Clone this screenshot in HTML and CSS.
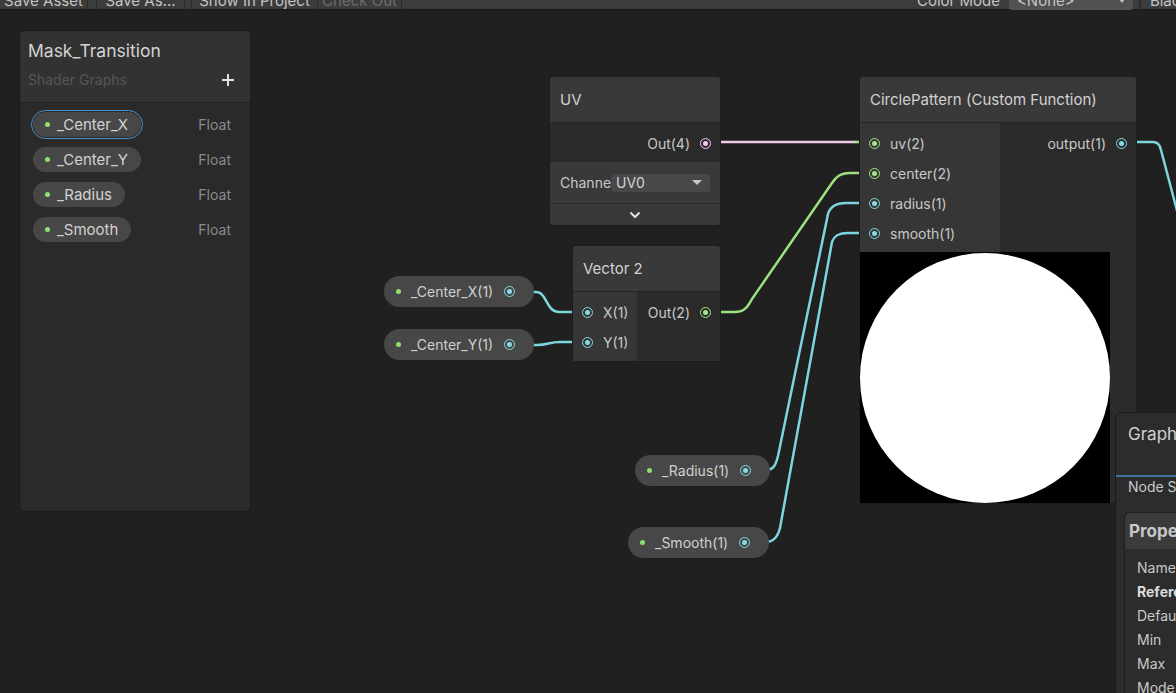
FILE: index.html
```html
<!DOCTYPE html>
<html>
<head>
<meta charset="utf-8">
<title>Shader Graph</title>
<link rel="stylesheet" href="styles.css">
</head>
<body>
<div class="stage">
  <div class="toolbar">
    <div class="tb-btn b1">Save Asset</div>
    <div class="tb-btn b2">Save As...</div>
    <div class="tb-btn b3">Show In Project</div>
    <div class="tb-btn b4 disabled">Check Out</div>
    <div class="tb-label">Color Mode</div>
    <div class="tb-dd"><span>&lt;None&gt;</span><i class="tb-caret"></i></div>
    <div class="tb-sep"></div>
    <div class="tb-btn b5">Blackboard</div>
  </div>

  <svg class="wires" width="1176" height="693" viewBox="0 0 1176 693">
    <path d="M711 142 L856 142" class="w pink"/>
    <path d="M856 142 L868 142" class="w green"/>
    <path d="M711 312 L735 312 C745 312 748 306 752 299 L832 183 C836 177 840 173 850 173 L868 173" class="w green"/>
    <path d="M514 292 L536 292 C547 292 546 312 559 312 L582 312" class="w blue"/>
    <path d="M514 345 L537 345 C548 345 549 342 560 342 L582 342" class="w blue"/>
    <path d="M750 470 L766 470 C774 470 776 464 778 456 L828 214 C830 207 836 203 846 203 L868 203" class="w blue"/>
    <path d="M749 542 L766 542 C774 542 778 536 780 528 L832 242 C834 236 838 233 848 233 L868 233" class="w blue"/>
    <path d="M1127 142 L1153 142 C1158 142 1160 145 1161 150 L1180 222" class="w blue"/>
  </svg>

  <!-- Blackboard -->
  <div class="blackboard">
    <div class="bb-head">
      <div class="bb-title">Mask_Transition</div>
      <div class="bb-sub">
        <span>Shader Graphs</span>
        <svg class="bb-plus" width="12" height="12" viewBox="0 0 12 12"><path d="M6 0 V12 M0 6 H12" stroke="#e2e2e2" stroke-width="2"/></svg>
      </div>
    </div>
    <div class="bb-list">
      <div class="bb-row"><div class="pill selected"><i class="dot"></i>_Center_X</div><span class="bb-type">Float</span></div>
      <div class="bb-row"><div class="pill"><i class="dot"></i>_Center_Y</div><span class="bb-type">Float</span></div>
      <div class="bb-row"><div class="pill"><i class="dot"></i>_Radius</div><span class="bb-type">Float</span></div>
      <div class="bb-row"><div class="pill"><i class="dot"></i>_Smooth</div><span class="bb-type">Float</span></div>
    </div>
  </div>

  <!-- UV node -->
  <div class="node n-uv">
    <div class="node-title">UV</div>
    <div class="node-body">
      <div class="outputs">
        <div class="prow"><span>Out(4)</span><i class="port pink"></i></div>
      </div>
    </div>
    <div class="node-controls">
      <span class="ctl-label">Channel</span>
      <div class="dd"><span>UV0</span><i class="dd-caret"></i></div>
    </div>
    <div class="node-collapse">
      <svg width="12" height="8" viewBox="0 0 12 8"><path d="M1.5 1.5 L6 6 L10.5 1.5" fill="none" stroke="#e0e0e0" stroke-width="2"/></svg>
    </div>
  </div>

  <!-- Vector 2 node -->
  <div class="node n-vec">
    <div class="node-title">Vector 2</div>
    <div class="node-body">
      <div class="inputs w65">
        <div class="prow"><i class="port blue"></i><span>X(1)</span></div>
        <div class="prow"><i class="port blue"></i><span>Y(1)</span></div>
      </div>
      <div class="outputs">
        <div class="prow"><span>Out(2)</span><i class="port green"></i></div>
      </div>
    </div>
  </div>

  <!-- CirclePattern node -->
  <div class="node n-circle">
    <div class="node-title">CirclePattern (Custom Function)</div>
    <div class="node-body">
      <div class="inputs w141">
        <div class="prow"><i class="port green"></i><span>uv(2)</span></div>
        <div class="prow"><i class="port green"></i><span>center(2)</span></div>
        <div class="prow"><i class="port blue"></i><span>radius(1)</span></div>
        <div class="prow"><i class="port blue"></i><span>smooth(1)</span></div>
      </div>
      <div class="outputs">
        <div class="prow"><span>output(1)</span><i class="port blue"></i></div>
      </div>
    </div>
    <div class="preview"><div class="circle"></div></div>
  </div>

  <!-- Property nodes -->
  <div class="pnode p-cx"><i class="dot"></i><span>_Center_X(1)</span><i class="port blue"></i></div>
  <div class="pnode p-cy"><i class="dot"></i><span>_Center_Y(1)</span><i class="port blue"></i></div>
  <div class="pnode p-r"><i class="dot"></i><span>_Radius(1)</span><i class="port blue"></i></div>
  <div class="pnode p-s"><i class="dot"></i><span>_Smooth(1)</span><i class="port blue"></i></div>

  <!-- Graph Inspector -->
  <div class="inspector">
    <div class="insp-head">Graph Inspector</div>
    <div class="insp-tab">Node Settings</div>
    <div class="insp-box">
      <div class="insp-box-head">Properties</div>
      <div class="insp-rows">
        <div class="insp-row">Name</div>
        <div class="insp-row bold">Reference</div>
        <div class="insp-row">Default</div>
        <div class="insp-row">Min</div>
        <div class="insp-row">Max</div>
        <div class="insp-row">Mode</div>
      </div>
    </div>
  </div>
</div>
</body>
</html>
```

FILE: styles.css
```css
* { box-sizing: border-box; }
body {
  margin: 0;
  background: #202020;
  font-family: Inter, "Noto Sans", sans-serif;
  overflow: hidden;
}
.stage {
  position: relative;
  width: 1176px;
  height: 693px;
  overflow: hidden;
  background: #202020;
}

/* Toolbar */
.toolbar {
  position: relative;
  z-index: 5;
  display: flex;
  align-items: center;
  height: 22px;
  margin-top: -12px;
  background: #3c3c3c;
  border-bottom: 1px solid #1a1a1a;
  font-size: 15px;
  color: #c4c4c4;
  white-space: nowrap;
}
.toolbar > * { flex-shrink: 0; }
.tb-btn, .tb-label {
  height: 22px;
  display: flex;
  align-items: flex-end;
  justify-content: center;
  padding-bottom: 1px;
  line-height: 17px;
}
.tb-btn {
  border-left: 1px solid #2c2c2c;
  border-right: 1px solid #2c2c2c;
}
.b1 { width: 88px; border-left: none; }
.b2 { width: 89px; margin-left: 8px; }
.b3 { width: 127px; margin-left: 6px; }
.b4 { width: 84px; border-left: none; }
.disabled { color: #6c6c6c; }
.tb-label { margin-left: 515px; }
.tb-dd {
  margin-left: 9px;
  width: 124px;
  height: 20px;
  margin-top: 2px;
  background: #515151;
  border-radius: 3px;
  display: flex;
  align-items: flex-end;
  justify-content: space-between;
  padding: 0 8px 1px 8px;
  line-height: 17px;
}
.tb-caret {
  width: 0; height: 0;
  margin-bottom: 6px;
  border-left: 3px solid transparent;
  border-right: 3px solid transparent;
  border-top: 4px solid #c4c4c4;
}
.tb-sep { width: 2px; height: 22px; background: #2c2c2c; margin-left: 6px; }
.b5 { margin-left: 3px; width: 100px; justify-content: flex-start; padding-left: 6px; border: none; }

/* Wires */
.wires { position: absolute; left: 0; top: 0; pointer-events: none; }
.w { fill: none; stroke-width: 2.5; stroke-linecap: round; stroke-linejoin: round; }
.w.pink { stroke: #f0cdef; }
.w.green { stroke: #9be27f; }
.w.blue { stroke: #7dd6df; }

/* Blackboard */
.blackboard {
  position: absolute;
  left: 19px;
  top: 30px;
  width: 232px;
  height: 482px;
  background: #2a2a2a;
  border: 1px solid #1b1b1b;
  border-radius: 5px;
  overflow: hidden;
}
.bb-head {
  height: 72px;
  background: #323232;
  border-bottom: 1px solid #222222;
  padding: 9px 16px 0 8px;
}
.bb-title { font-size: 17.5px; line-height: 22px; color: #d4d4d4; }
.bb-sub {
  margin-top: 9px;
  display: flex;
  justify-content: space-between;
  align-items: center;
  font-size: 14px;
  line-height: 18px;
  color: #575757;
}
.bb-list { padding-top: 4px; }
.bb-row {
  height: 35px;
  display: flex;
  align-items: center;
  justify-content: space-between;
  padding: 0 19px 0 13px;
}
.pill {
  height: 25px;
  border-radius: 13px;
  background: #474747;
  display: flex;
  align-items: center;
  padding: 0 13px 0 12px;
  font-size: 15px;
  color: #d2d2d2;
}
.pill.selected { outline: 1px solid #4394cf; outline-offset: 1px; }
.dot {
  width: 5px; height: 5px;
  border-radius: 50%;
  background: #8fe06c;
  margin-right: 7px;
  flex-shrink: 0;
}
.bb-type { font-size: 14px; color: #8a8a8a; }

/* Nodes */
.node {
  position: absolute;
  background: #2b2b2b;
  border: 1px solid #1c1c1c;
  border-radius: 3px;
  color: #c8c8c8;
  font-size: 14px;
}
.node-title {
  height: 46px;
  display: flex;
  align-items: center;
  padding-left: 10px;
  background: #393939;
  border-bottom: 1px solid #252525;
  font-size: 15px;
  color: #d2d2d2;
  border-radius: 3px 3px 0 0;
  white-space: nowrap;
}
.node-body { display: flex; }
.inputs { background: #363636; padding: 5px 0 4px; border-right: 1px solid #2b2b2b; }
.w65 { width: 65px; }
.w141 { width: 141px; }
.outputs { flex: 1; padding: 5px 0 4px; background: #2b2b2b; }
.prow { height: 30px; display: flex; align-items: center; gap: 10px; white-space: nowrap; }
.inputs .prow { padding-left: 9px; }
.outputs .prow { justify-content: flex-end; padding-right: 9px; }
.port {
  width: 11px; height: 11px;
  border-radius: 50%;
  border: 1.5px solid currentColor;
  display: flex;
  align-items: center;
  justify-content: center;
  flex-shrink: 0;
}
.port::after {
  content: "";
  width: 5px; height: 5px;
  border-radius: 50%;
  background: currentColor;
}
.port.blue { color: #86dae3; }
.port.green { color: #a2e887; }
.port.pink { color: #f2c8f0; }

.n-uv { left: 549px; top: 76px; width: 172px; }
.node-controls {
  height: 42px;
  background: #393939;
  display: flex;
  align-items: center;
  padding-left: 10px;
  border-bottom: 1px solid #2a2a2a;
}
.ctl-label { width: 52px; overflow: hidden; white-space: nowrap; }
.dd {
  width: 98px;
  height: 18px;
  background: #484848;
  border-radius: 3px;
  display: flex;
  align-items: center;
  justify-content: space-between;
  padding: 0 8px 0 4px;
  color: #d2d2d2;
}
.dd-caret {
  width: 0; height: 0;
  border-left: 5px solid transparent;
  border-right: 5px solid transparent;
  border-top: 5px solid #c8c8c8;
}
.node-collapse {
  height: 21px;
  background: #393939;
  display: flex;
  align-items: center;
  justify-content: center;
  border-radius: 0 0 3px 3px;
}

.n-vec { left: 572px; top: 245px; width: 149px; }
.n-circle { left: 859px; top: 76px; width: 278px; }
.preview {
  width: 250px;
  height: 251px;
  background: #000;
  display: flex;
  align-items: center;
  justify-content: center;
}
.circle { width: 250px; height: 250px; border-radius: 50%; background: #fff; }

/* Property nodes */
.pnode {
  position: absolute;
  height: 31px;
  border-radius: 16px;
  background: #474747;
  display: flex;
  align-items: center;
  padding: 0 19px 0 12px;
  font-size: 14px;
  color: #d0d0d0;
  white-space: nowrap;
}
.pnode .dot { margin-right: 10px; }
.pnode .port { margin-left: 11px; }
.p-cx { left: 384px; top: 276px; }
.p-cy { left: 384px; top: 329px; }
.p-r { left: 635px; top: 455px; }
.p-s { left: 628px; top: 527px; }

/* Inspector */
.inspector {
  position: absolute;
  left: 1115px;
  top: 412px;
  width: 120px;
  height: 300px;
  background: #2c2c2c;
  border: 1px solid #1a1a1a;
  border-radius: 6px 0 0 0;
  white-space: nowrap;
  overflow: hidden;
}
.insp-head {
  height: 64px;
  padding: 10px 0 0 12px;
  font-size: 17px;
  line-height: 22px;
  color: #d0d0d0;
  border-bottom: 2px solid #41709a;
}
.insp-tab {
  padding-left: 12px;
  font-size: 14px;
  line-height: 20px;
  color: #c8c8c8;
}
.insp-box {
  margin: 15px 0 0 8px;
  border: 1px solid #1e1e1e;
  border-radius: 5px 0 0 0;
  background: #2c2c2c;
  height: 200px;
}
.insp-box-head {
  height: 36px;
  background: #3b3b3b;
  display: flex;
  align-items: center;
  padding-left: 4px;
  font-size: 17px;
  font-weight: 700;
  color: #c8c8c8;
  border-radius: 5px 0 0 0;
}
.insp-rows { padding: 7px 0 0 12px; }
.insp-row { height: 24px; line-height: 24px; font-size: 14px; color: #c8c8c8; }
.insp-row.bold { font-weight: 700; color: #dcdcdc; }
```
